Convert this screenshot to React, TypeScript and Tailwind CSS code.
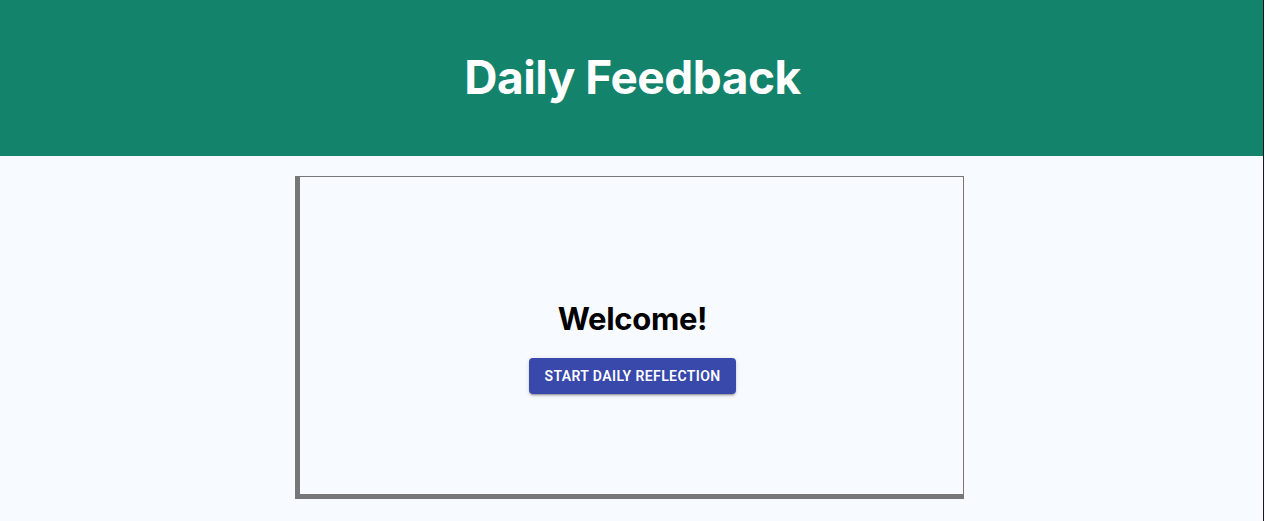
import React from "react";

export default function App() {
  return (
    <div className="min-h-[521px] w-full bg-[#f7fbff] flex flex-col">
      <div className="flex flex-1">
        <div className="flex-1 flex flex-col">
          <header className="h-[156px] bg-[#14836b] flex items-center justify-center">
            <h1
              className="text-white text-[46px] font-bold leading-none tracking-[-0.5px] mt-[-2px] ml-[2px]"
              style={{ fontFamily: "Inter, 'Noto Sans', sans-serif" }}
            >
              Daily Feedback
            </h1>
          </header>
          <main className="pt-[20px]">
            <div className="ml-[295px] w-[669px] h-[323px] border-[#777777] border-t border-r border-l-[5px] border-b-[5px] flex flex-col items-center pt-[124px]">
              <h2
                className="text-black text-[31px] font-bold leading-[36px] tracking-[-0.3px] ml-[2px]"
                style={{ fontFamily: "Inter, 'Noto Sans', sans-serif" }}
              >
                Welcome!
              </h2>
              <button
                className="mt-[21px] ml-[2px] h-[36px] w-[207px] rounded-[4px] bg-[#3949ab] text-white text-[14px] font-semibold uppercase tracking-[0.4px] shadow-[0_3px_1px_-2px_rgba(0,0,0,0.2),0_2px_2px_0_rgba(0,0,0,0.14),0_1px_5px_0_rgba(0,0,0,0.12)]"
                style={{ fontFamily: "Roboto, 'Liberation Sans', sans-serif" }}
              >
                Start Daily Reflection
              </button>
            </div>
          </main>
        </div>
        <div className="w-px bg-[#1a1a1a]" />
        <div className="w-px bg-[#f7fbff]" />
      </div>
    </div>
  );
}
